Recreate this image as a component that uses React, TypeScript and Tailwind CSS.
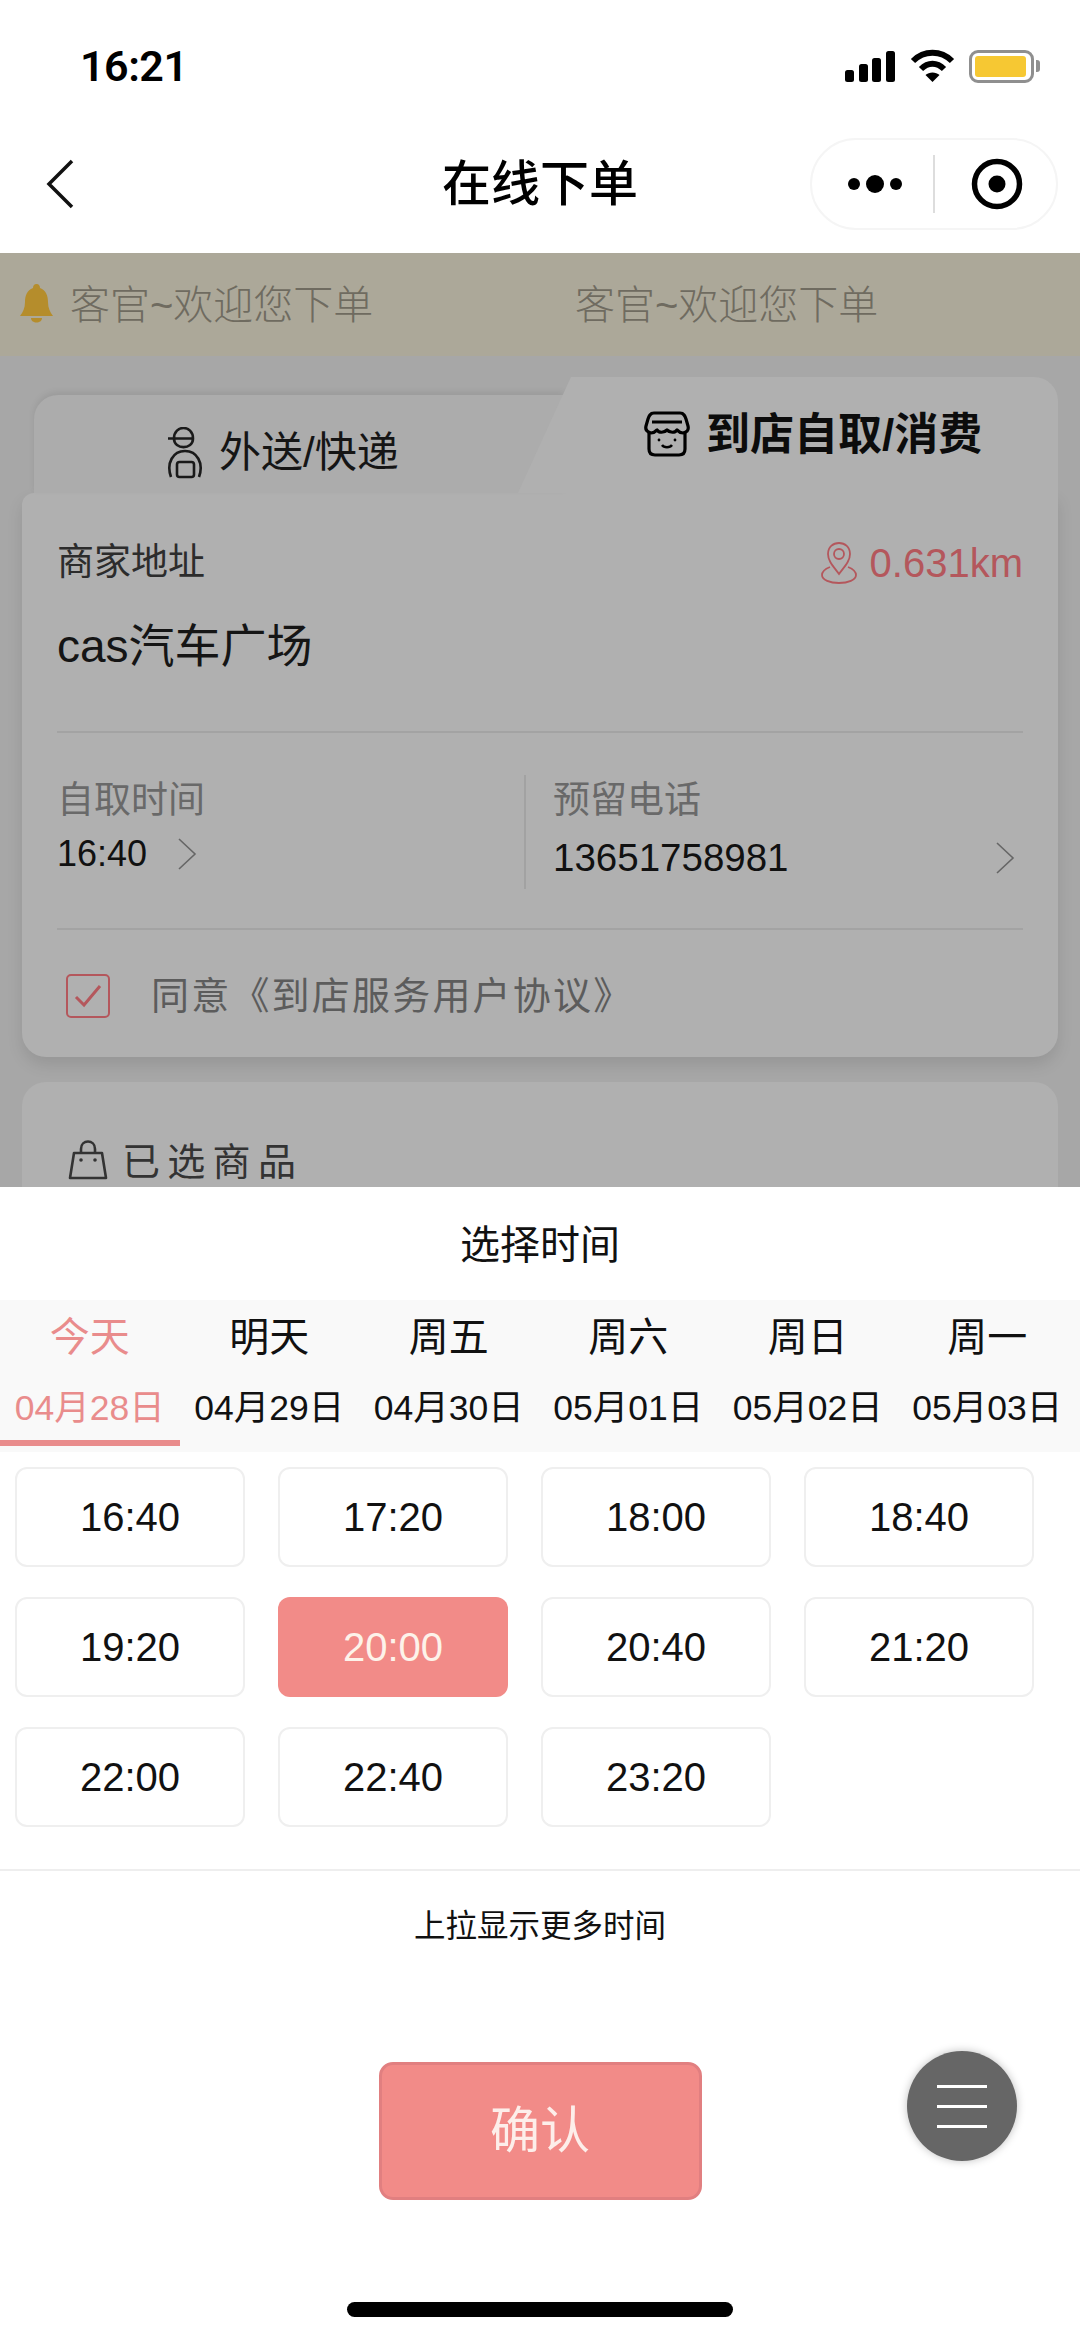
import React from 'react';

const days = [
  { label: '今天', date: '04月28日', active: true },
  { label: '明天', date: '04月29日' },
  { label: '周五', date: '04月30日' },
  { label: '周六', date: '05月01日' },
  { label: '周日', date: '05月02日' },
  { label: '周一', date: '05月03日' },
];

const times = ['16:40', '17:20', '18:00', '18:40', '19:20', '20:00', '20:40', '21:20', '22:00', '22:40', '23:20'];

function StatusIcons() {
  return (
    <div className="flex items-center">
      <svg width="52" height="32" viewBox="0 0 52 32" fill="#000">
        <rect x="1" y="20" width="9" height="12" rx="2.5" />
        <rect x="15" y="14" width="9" height="18" rx="2.5" />
        <rect x="28" y="8" width="9" height="24" rx="2.5" />
        <rect x="42" y="1" width="9" height="31" rx="2.5" />
      </svg>
      <svg className="ml-[14px]" width="45" height="34" viewBox="0 0 45 34" fill="none" stroke="#000" strokeWidth="6">
        <path d="M3 12 C14 1 31 1 42 12" />
        <path d="M11 20 C18 13 27 13 34 20" />
        <path d="M22.5 33 L15.5 26 C19 22.5 26 22.5 29.5 26 Z" fill="#000" stroke="none" />
      </svg>
      <div className="ml-[14px] w-[65px] h-[33px] rounded-[9px] border-[3px] border-[#8f8f8f] bg-white p-[3px]">
        <div className="h-full w-[51px] rounded-[3px] bg-[#f6c833]" />
      </div>
      <div className="ml-[2px] w-[4px] h-[12px] rounded-r-[3px] bg-[#8f8f8f]" />
    </div>
  );
}

function Chevron({ className }: { className: string }) {
  return (
    <svg className={className} width="20" height="32" viewBox="0 0 20 32" fill="none" stroke="#666" strokeWidth="1.6">
      <path d="M2 1 L18 16 L2 31" />
    </svg>
  );
}

export default function App() {
  return (
    <div className="relative w-[1080px] h-[2339px] overflow-hidden bg-white text-black font-['Liberation_Sans','Noto_Sans_CJK_SC',sans-serif]">
      {/* status bar */}
      <div className="h-[138px] pl-[80px] pr-[40px] pt-[47px] flex items-start justify-between">
        <span className="text-[43px] leading-[38px] font-semibold font-['Roboto','Liberation_Sans',sans-serif] tracking-[-0.5px]">16:21</span>
        <div className="pt-[2px]">
          <StatusIcons />
        </div>
      </div>

      {/* nav */}
      <div className="h-[115px] grid grid-cols-[270px_1fr_270px] items-start">
        <svg className="ml-[46px] mt-[21px]" width="28" height="50" viewBox="0 0 28 50" fill="none" stroke="#111" strokeWidth="3.5">
          <path d="M26 2 L3 25 L26 48" />
        </svg>
        <div className="text-center text-[49px] leading-[92px] font-medium">在线下单</div>
        <div className="w-[248px] h-[92px] rounded-[46px] border-2 border-[#f5f5f5] bg-white flex items-center">
          <svg className="ml-[36px]" width="54" height="20" viewBox="0 0 54 20" fill="#000">
            <circle cx="6" cy="10" r="6" />
            <circle cx="27" cy="10" r="9" />
            <circle cx="48" cy="10" r="6" />
          </svg>
          <div className="ml-[31px] w-[2px] h-[58px] bg-[#dddddd]" />
          <svg className="ml-[36px]" width="52" height="52" viewBox="0 0 52 52">
            <circle cx="26" cy="26" r="22.5" fill="none" stroke="#000" strokeWidth="5.5" />
            <circle cx="26" cy="26" r="8.5" fill="#000" />
          </svg>
        </div>
      </div>

      {/* dimmed page */}
      <div className="h-[934px] overflow-hidden bg-[#a7a7a7]">
        <div className="h-[103px] bg-[#aca899] flex items-center pl-[20px]">
          <svg width="33" height="42" viewBox="0 0 33 42" fill="#b58d2c">
            <path d="M16.5 0 C19 0 20 2 20 4 C26 6 28 12 28 18 C28 24 30 28 33 32 L0 32 C3 28 5 24 5 18 C5 12 7 6 13 4 C13 2 14 0 16.5 0 Z" />
            <path d="M11 34 L22 34 C22 40 11 40 11 34 Z" />
          </svg>
          <span className="ml-[17px] w-[505px] text-[40px] leading-none text-[#6f6b60] font-light">客官~欢迎您下单</span>
          <span className="text-[40px] leading-none text-[#6f6b60] font-light">客官~欢迎您下单</span>
        </div>

        {/* delivery tabs */}
        <div className="pt-[21px] pl-[34px] flex items-end">
          <div className="w-[530px] h-[98px] -mr-[46px] rounded-tl-[24px] bg-[#acacac] shadow-[0_-3px_6px_rgba(0,0,0,0.08)] flex items-center pl-[133px] pt-[18px]">
            <svg width="38" height="52" viewBox="0 0 38 52" fill="none" stroke="#1a1a1a" strokeWidth="2.6">
              <path d="M1 11.5 H26 M7 11.5 C7 -2.5 26 -2.5 26 11.5 C26 23 7 23 7 11.5" />
              <path d="M4 50 C-1 36 6 24 18 24 C30 24 37 36 32 50" />
              <rect x="10" y="35" width="17" height="15" rx="2.5" />
            </svg>
            <span className="ml-[14px] text-[42px] leading-none text-[#151515]">外送/快递</span>
          </div>
          <div className="relative w-[540px] h-[116px] rounded-tr-[24px] bg-[#b0b0b0] [clip-path:polygon(53px_0,100%_0,100%_100%,0_100%)] flex items-start pl-[126px] pt-[34px]">
            <svg width="46" height="46" viewBox="0 0 46 46" fill="none" stroke="#000" strokeWidth="3.2" strokeLinejoin="round">
              <path d="M10 2 H36 C40 2 41 5 42 8 L44 15 C45 19 43 21 39 22 C36 22 34 20 33 19 C31 22 26 22 23 19 C20 22 15 22 13 19 C12 20 10 22 7 22 C3 21 1 19 2 15 L4 8 C5 5 6 2 10 2 Z" />
              <path d="M8 11 H38" />
              <path d="M5 22 V38 C5 42 7 44 11 44 H35 C39 44 41 42 41 38 V22" />
              <path d="M18 34 C20 37 26 37 28 34" strokeWidth="2.4" />
              <circle cx="15" cy="29" r="1.4" fill="#000" stroke="none" />
              <circle cx="31" cy="29" r="1.4" fill="#000" stroke="none" />
            </svg>
            <span className="ml-[16px] mt-[2px] text-[44px] leading-[44px] font-bold text-[#0c0c0c] whitespace-nowrap">到店自取/消费</span>
          </div>
        </div>

        {/* address card */}
        <div className="mx-[22px] h-[564px] rounded-b-[24px] rounded-tl-[12px] bg-[#b0b0b0] shadow-[0_8px_16px_rgba(0,0,0,0.10)] px-[35px]">
          <div className="h-[240px] border-b-2 border-[#a3a3a3]">
            <div className="pt-[46px] flex items-center justify-between">
              <span className="text-[37px] leading-[48px] text-[#2c2c2c]">商家地址</span>
              <div className="flex items-center">
                <svg width="38" height="42" viewBox="0 0 38 42" fill="none" stroke="#b4575c" strokeWidth="1.8">
                  <path d="M19 32 C13 24 8 19 8 12 C8 5 13 1 19 1 C25 1 30 5 30 12 C30 19 25 24 19 32 Z" />
                  <circle cx="19" cy="12" r="5" />
                  <path d="M10 25 C5 27 2 30 2 33 C2 38 10 41 19 41 C28 41 36 38 36 33 C36 30 33 27 28 25" />
                </svg>
                <span className="ml-[12px] text-[40px] leading-[48px] text-[#b4575c]">0.631km</span>
              </div>
            </div>
            <div className="mt-[31px] text-[46px] leading-[56px] text-[#151515]">cas汽车广场</div>
          </div>

          <div className="h-[197px] border-b-2 border-[#a3a3a3] flex items-start pt-[42px]">
            <div className="w-[469px] h-[114px] border-r-2 border-[#a2a2a2] flex flex-col pt-[3px]">
              <span className="text-[37px] leading-[46px] text-[#696969]">自取时间</span>
              <div className="mt-[12px] flex items-center">
                <span className="text-[36px] leading-[36px] text-[#111]">16:40</span>
                <Chevron className="ml-[30px]" />
              </div>
            </div>
            <div className="flex-1 pl-[27px] flex flex-col pt-[3px]">
              <span className="text-[37px] leading-[46px] text-[#696969]">预留电话</span>
              <div className="mt-[15px] flex items-center justify-between pr-[8px]">
                <span className="text-[38.5px] leading-[38px] text-[#111]">13651758981</span>
                <Chevron className="" />
              </div>
            </div>
          </div>

          <div className="flex items-center pt-[44px] pl-[9px]">
            <div className="w-[44px] h-[44px] rounded-[5px] border-2 border-[#b4575c] flex items-center justify-center">
              <svg width="28" height="24" viewBox="0 0 28 24" fill="none" stroke="#b4575c" strokeWidth="3">
                <path d="M2 13 L10 21 L26 2" />
              </svg>
            </div>
            <span className="ml-[41px] text-[38px] leading-[44px] tracking-[2.2px] text-[#5c5c5c]">同意《到店服务用户协议》</span>
          </div>
        </div>

        {/* selected goods card, cut by the sheet */}
        <div className="mx-[22px] mt-[25px] h-[200px] rounded-t-[24px] bg-[#b0b0b0] pt-[58px] pl-[46px] flex items-start">
          <svg width="40" height="40" viewBox="0 0 40 40" fill="none" stroke="#333" strokeWidth="2.6" strokeLinejoin="round">
            <path d="M6 13 H34 L38 38 H2 Z" />
            <path d="M13 13 V9 C13 -1 27 -1 27 9 V13" />
            <circle cx="13" cy="20" r="1.8" fill="#333" stroke="none" />
            <circle cx="27" cy="20" r="1.8" fill="#333" stroke="none" />
          </svg>
          <span className="ml-[14px] text-[38px] leading-[44px] tracking-[7.3px] text-[#333]">已选商品</span>
        </div>
      </div>

      {/* time sheet */}
      <div className="flex flex-col items-stretch">
        <div className="h-[113px] pt-[36px] text-center text-[40px] leading-[44px] text-[#111]">选择时间</div>
        <div className="h-[152px] bg-[#f9f9f9] grid grid-cols-[repeat(6,179.5px)]">
          {days.map((day) => (
            <div key={day.date} className={`flex flex-col items-center pt-[13px] h-[146px] ${day.active ? 'border-b-[6px] border-[#e98c8c] text-[#e98c8c]' : 'text-[#111]'}`}>
              <span className="text-[40px] leading-[48px]">{day.label}</span>
              <span className="mt-[27px] text-[35.5px] leading-[40px] whitespace-nowrap">{day.date}</span>
            </div>
          ))}
        </div>

        <div className="pt-[15px] px-[15px] grid grid-cols-[repeat(4,230px)] gap-x-[33px] gap-y-[30px]">
          {times.map((time) => (
            <div
              key={time}
              className={`h-[100px] rounded-[12px] flex items-center justify-center text-[40px] ${
                time === '20:00'
                  ? 'bg-[#f28b88] text-[#fdf3ea]'
                  : 'bg-white border-2 border-[#efefef] text-[#111]'
              }`}
            >
              {time}
            </div>
          ))}
        </div>

        <div className="mt-[42px] border-t-2 border-[#eeeeee] pt-[35px] text-center text-[31.5px] leading-[40px] text-[#111]">上拉显示更多时间</div>

        <div className="mt-[116px] flex justify-center">
          <button className="w-[323px] h-[138px] rounded-[14px] border-[3px] border-[#e17f80] bg-[#f28b88] text-[50px] text-[#fdeeea]">确认</button>
        </div>

        <div className="mt-[102px] mx-auto w-[386px] h-[15px] rounded-full bg-black" />
      </div>

      {/* floating menu */}
      <div className="absolute left-[907px] top-[2051px] w-[110px] h-[110px] rounded-full bg-[#666666] shadow-[0_0_8px_rgba(0,0,0,0.25)] flex flex-col items-center justify-center gap-[17px]">
        <div className="w-[50px] h-[3px] bg-white" />
        <div className="w-[50px] h-[3px] bg-white" />
        <div className="w-[50px] h-[3px] bg-white" />
      </div>
    </div>
  );
}
